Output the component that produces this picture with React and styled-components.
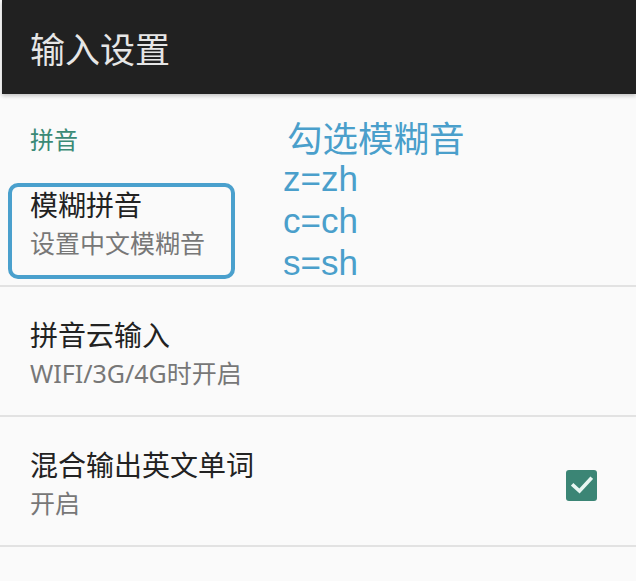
import React from "react";
import styled, { createGlobalStyle } from "styled-components";

const Global = createGlobalStyle`
  html, body { margin: 0; padding: 0; background: #fafafa; }
  body { font-family: Roboto, "Noto Sans CJK SC", sans-serif; }
  * { box-sizing: border-box; }
`;

const Screen = styled.div`
  position: relative;
  width: 636px;
  height: 581px;
  overflow: hidden;
  background: #fafafa;
`;

const AppBar = styled.header`
  height: 94px;
  background: #212121;
  display: flex;
  align-items: center;
  padding-left: 28px;
  margin-left: 2px;
  box-shadow: 0 2px 4px rgba(0, 0, 0, 0.22);
  position: relative;
  z-index: 1;
`;

const AppTitle = styled.h1`
  margin: 0;
  font-family: Roboto, "Noto Sans CJK SC", sans-serif;
  font-weight: 400;
  font-size: 35px;
  color: #e6e6e6;
`;

const List = styled.div`
  display: flex;
  flex-direction: column;
`;

const SectionHeader = styled.div`
  padding: 33px 0 0 30px;
  height: 63px;
  font-size: 24px;
  line-height: 28px;
  color: #3b8a76;
`;

const Row = styled.div`
  display: flex;
  align-items: center;
  justify-content: space-between;
  padding: 32px 39px 24px 30px;
  border-bottom: 2px solid #e2e2e2;
`;

const Texts = styled.div`
  display: flex;
  flex-direction: column;
`;

const Title = styled.div`
  font-size: 28px;
  line-height: 36px;
  color: #222;
`;

const Summary = styled.div`
  font-family: "Noto Sans", "Noto Sans CJK SC", sans-serif;
  font-size: 25px;
  line-height: 36px;
  color: #777;
`;

const Check = styled.div`
  width: 31px;
  height: 31px;
  border-radius: 3px;
  background: #3b8575;
  display: flex;
  align-items: center;
  justify-content: center;
`;

const Highlight = styled.div`
  position: absolute;
  left: 8px;
  top: 183px;
  width: 227px;
  height: 96px;
  border: 4.5px solid #4aa0cd;
  border-radius: 10px;
  pointer-events: none;
`;

const Note = styled.div`
  position: absolute;
  left: 283px;
  top: 116px;
  color: #4a9fcb;
  font-family: "Liberation Sans", "Noto Sans CJK SC", sans-serif;
  font-size: 35px;
  line-height: 42px;
`;

const NoteHead = styled.div`
  font-family: "Noto Sans CJK SC", sans-serif;
  font-size: 35.5px;
  padding-left: 4px;
`;

export default function App() {
  return (
    <Screen>
      <Global />
      <AppBar>
        <AppTitle>输入设置</AppTitle>
      </AppBar>
      <List>
        <SectionHeader>拼音</SectionHeader>
        <Row>
          <Texts>
            <Title>模糊拼音</Title>
            <Summary>设置中文模糊音</Summary>
          </Texts>
        </Row>
        <Row>
          <Texts>
            <Title>拼音云输入</Title>
            <Summary>WIFI/3G/4G时开启</Summary>
          </Texts>
        </Row>
        <Row>
          <Texts>
            <Title>混合输出英文单词</Title>
            <Summary>开启</Summary>
          </Texts>
          <Check>
            <svg width="22" height="18" viewBox="0 0 22 18">
              <path
                d="M2.5 9.5 L8.5 15 L19.5 3"
                fill="none"
                stroke="#e8f6f2"
                strokeWidth="3.6"
                strokeLinecap="square"
              />
            </svg>
          </Check>
        </Row>
      </List>
      <Highlight />
      <Note>
        <NoteHead>勾选模糊音</NoteHead>
        <div>z=zh</div>
        <div>c=ch</div>
        <div>s=sh</div>
      </Note>
    </Screen>
  );
}
